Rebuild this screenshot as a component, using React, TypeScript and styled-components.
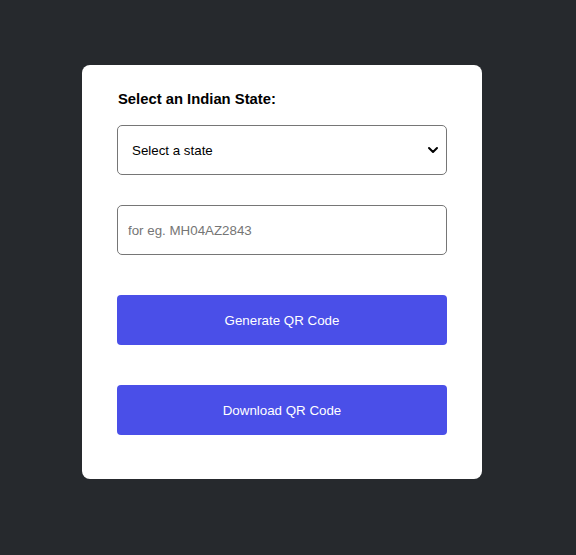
import React from "react";
import styled, { createGlobalStyle } from "styled-components";

const Global = createGlobalStyle`
  html, body { margin: 0; padding: 0; background: #26292d; }
  body { font-family: "Liberation Sans", Arial, sans-serif; }
  * { box-sizing: border-box; }
`;

const Page = styled.div`
  min-height: 555px;
  padding: 65px 0 0 82px;
  background: #26292d;
`;

const Card = styled.div`
  width: 400px;
  background: #ffffff;
  border-radius: 8px;
  padding: 26px 35px 44px;
  display: flex;
  flex-direction: column;
`;

const Label = styled.label`
  display: block;
  font-size: 14.8px;
  font-weight: bold;
  line-height: 17px;
  color: #000;
  margin: 0 0 17px 1px;
`;

const SelectWrap = styled.div`
  position: relative;
  margin-bottom: 30px;
`;

const Select = styled.select`
  appearance: none;
  width: 100%;
  height: 50px;
  border: 1px solid #767676;
  border-radius: 5px;
  background: #fff;
  padding: 0 14px;
  font-family: "Liberation Sans", Arial, sans-serif;
  font-size: 13.33px;
  color: #000;
  outline: none;
`;

const Chevron = styled.svg`
  position: absolute;
  right: 8px;
  top: 21px;
  pointer-events: none;
`;

const Input = styled.input`
  width: 100%;
  height: 50px;
  border: 1px solid #767676;
  border-radius: 5px;
  padding: 0 10px;
  font-family: "Liberation Sans", Arial, sans-serif;
  font-size: 13.33px;
  color: #000;
  margin-bottom: 40px;
  outline: none;
  &::placeholder { color: #757575; }
`;

const Button = styled.button<{ $last?: boolean }>`
  width: 100%;
  height: 50px;
  border: none;
  border-radius: 4px;
  background: #4a4fe8;
  color: #fff;
  font-family: "Liberation Sans", Arial, sans-serif;
  font-size: 13.33px;
  cursor: pointer;
  margin-bottom: ${(p) => (p.$last ? "0" : "40px")};
`;

export default function App() {
  return (
    <>
      <Global />
      <Page>
        <Card>
          <Label htmlFor="state">Select an Indian State:</Label>
          <SelectWrap>
            <Select id="state" defaultValue="">
              <option value="">Select a state</option>
              <option value="MH">Maharashtra</option>
              <option value="KA">Karnataka</option>
            </Select>
            <Chevron width="12" height="8" viewBox="0 0 12 8">
              <path d="M2 2 L6 6 L10 2" fill="none" stroke="#000" strokeWidth="2" strokeLinecap="round" strokeLinejoin="round" />
            </Chevron>
          </SelectWrap>
          <Input placeholder="for eg. MH04AZ2843" />
          <Button>Generate QR Code</Button>
          <Button $last>Download QR Code</Button>
        </Card>
      </Page>
    </>
  );
}
